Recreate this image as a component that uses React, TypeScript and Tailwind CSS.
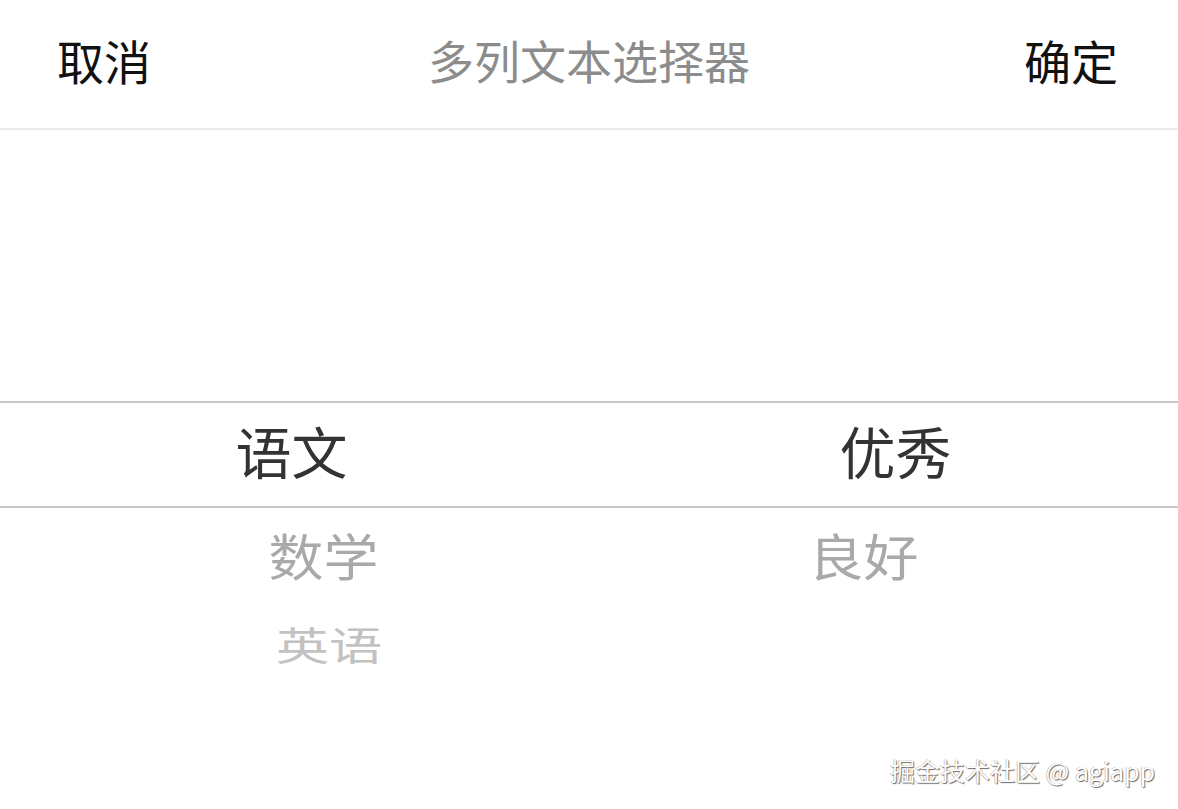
import React from "react";

const font = { fontFamily: '"Noto Sans CJK SC", "Noto Sans", sans-serif' };

export default function App() {
  return (
    <div
      className="relative h-[809px] w-[1178px] overflow-hidden bg-white"
      style={font}
    >
      {/* header */}
      <div className="grid h-[130px] grid-cols-[1fr_auto_1fr] items-center border-b-2 border-[#ebebeb] px-[57px] pb-[10px]">
        <div className="text-left text-[47px] leading-none text-[#111]">取消</div>
        <div className="text-[46px] leading-none text-[#8c8c8c]">多列文本选择器</div>
        <div className="pr-[3px] text-right text-[47px] leading-none text-[#111]">确定</div>
      </div>

      {/* picker */}
      <div className="h-[271px]" />
      <div className="grid h-[107px] grid-cols-2 border-y-2 border-[#c8c8c8]">
        <div className="flex items-center justify-center pb-[10px]">
          <span className="-translate-x-[3px] text-[56px] leading-none text-[#333333]">语文</span>
        </div>
        <div className="flex items-center justify-center pb-[10px]">
          <span className="translate-x-[12px] text-[56px] leading-none text-[#333333]">优秀</span>
        </div>
      </div>
      <div className="grid grid-cols-2">
        <div className="flex flex-col">
          <div className="flex h-[100px] items-center justify-center pb-[8px]">
            <span className="translate-x-[29px] scale-y-[0.9] text-[55px] leading-none text-[#a9a9a9]">数学</span>
          </div>
          <div className="flex h-[74px] items-center justify-center pb-[4px]">
            <span className="translate-x-[35px] scale-x-[0.97] scale-y-[0.7] text-[55px] leading-none text-[#c2c2c2]">英语</span>
          </div>
        </div>
        <div className="flex flex-col">
          <div className="flex h-[100px] items-center justify-center pb-[8px]">
            <span className="-translate-x-[20px] scale-y-[0.9] text-[55px] leading-none text-[#a9a9a9]">良好</span>
          </div>
        </div>
      </div>

      {/* watermark */}
      <div className="absolute bottom-[26px] right-[23px] text-[25px] leading-none text-white [text-shadow:1px_1px_1px_#6b6b6b,-0.5px_-0.5px_0.5px_#9a9a9a]">
        掘金技术社区 @ agiapp
      </div>
    </div>
  );
}
